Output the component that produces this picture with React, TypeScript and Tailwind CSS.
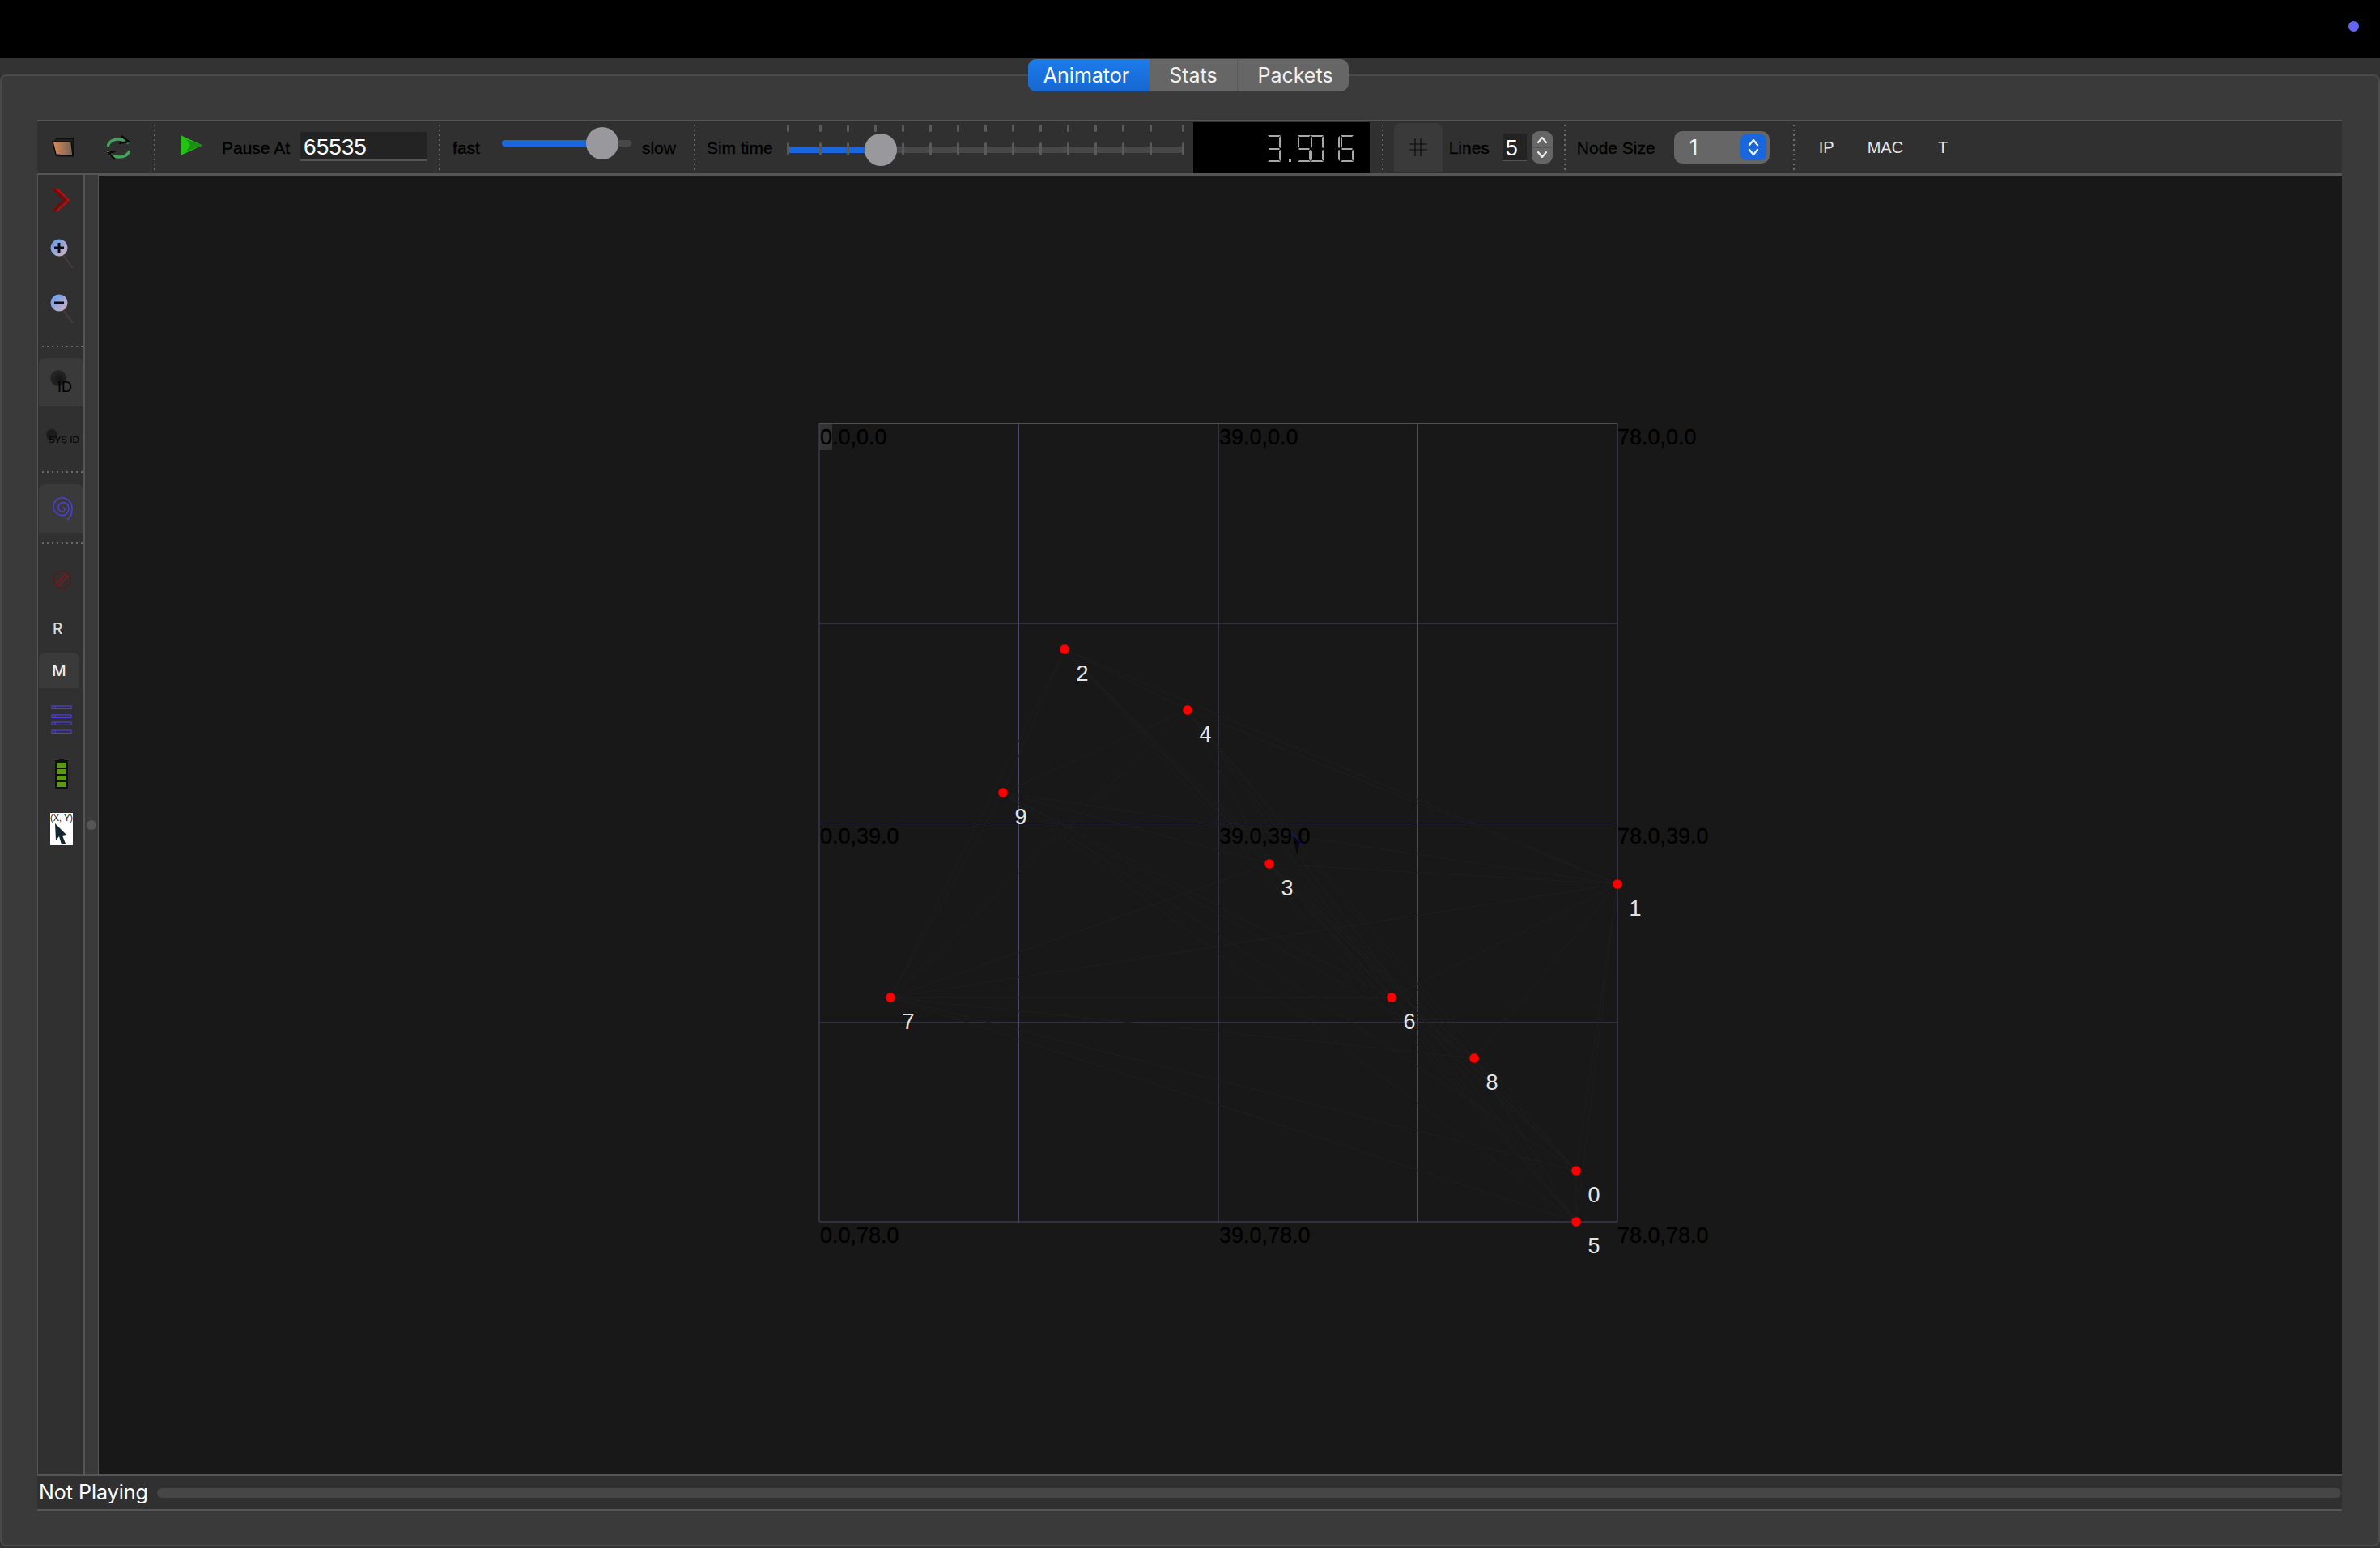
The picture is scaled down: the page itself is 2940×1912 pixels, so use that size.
import type { ReactNode } from "react";

const sans = "font-['Liberation_Sans',Arial,sans-serif]";

const ORIGIN = { x: 122, y: 217 };
const GRID = [1012, 1258.5, 1505, 1751.5, 1998];
const GRID_Y = [523.5, 770, 1016.5, 1263, 1509];

const nodes = [
  { id: 0, x: 1947, y: 1446 },
  { id: 1, x: 1998, y: 1092 },
  { id: 2, x: 1315, y: 802 },
  { id: 3, x: 1568, y: 1067 },
  { id: 4, x: 1467, y: 877 },
  { id: 5, x: 1947, y: 1509 },
  { id: 6, x: 1719, y: 1232 },
  { id: 7, x: 1100, y: 1232 },
  { id: 8, x: 1821, y: 1307 },
  { id: 9, x: 1239, y: 979 },
];

const axisLabels = [
  { text: "0.0,0.0", x: 1012, y: 540 },
  { text: "39.0,0.0", x: 1505, y: 540 },
  { text: "78.0,0.0", x: 1997, y: 540 },
  { text: "0.0,39.0", x: 1012, y: 1033 },
  { text: "39.0,39.0", x: 1505, y: 1033 },
  { text: "78.0,39.0", x: 1997, y: 1033 },
  { text: "0.0,78.0", x: 1012, y: 1526 },
  { text: "39.0,78.0", x: 1505, y: 1526 },
  { text: "78.0,78.0", x: 1997, y: 1526 },
];

const simTicks = [0, 40, 74, 108, 142, 176, 210, 244, 278, 312, 346, 380, 414, 448, 488];

function Sep() {
  return <div className="h-[56px] w-[2px] shrink-0 bg-[repeating-linear-gradient(to_bottom,#6a6a6a_0_2px,transparent_2px_6px)]" />;
}

function Label({ children, className }: { children: ReactNode; className: string }) {
  return (
    <span className={`shrink-0 text-[21px] leading-none whitespace-nowrap text-black [-webkit-text-stroke:0.3px_#000] ${className}`}>
      {children}
    </span>
  );
}

function Chevrons() {
  return (
    <svg width="14" height="24" viewBox="0 0 14 24">
      <path d="M2 9L7 3L12 9" fill="none" stroke="#f2f2f2" strokeWidth="2.4" strokeLinecap="round" strokeLinejoin="round" />
      <path d="M2 15L7 21L12 15" fill="none" stroke="#f2f2f2" strokeWidth="2.4" strokeLinecap="round" strokeLinejoin="round" />
    </svg>
  );
}

// segment outlines like the old QLCDNumber widget draws them
const TOP = "M0 0H16L14 2H2Z";
const BOTTOM = "M0 33H16L14 31H2Z";
const MID = "M2 16H14L15 17L14 18H2L1 17Z";
const UP_LEFT = "M0 1L2 3V15L0 16Z";
const UP_RIGHT = "M16 1L14 3V15L16 16Z";
const LOW_LEFT = "M0 18L2 19V30L0 32Z";
const LOW_RIGHT = "M16 18L14 19V30L16 32Z";

const SEGMENTS: Record<string, string[]> = {
  "3": [TOP, UP_RIGHT, MID, LOW_RIGHT, BOTTOM],
  "5": [TOP, UP_LEFT, MID, LOW_RIGHT, BOTTOM],
  "0": [TOP, UP_LEFT, UP_RIGHT, LOW_LEFT, LOW_RIGHT, BOTTOM],
  "1": [UP_RIGHT, LOW_RIGHT],
};

function LcdNumber() {
  const digits = [
    { c: "3", x: 0 },
    { c: "5", x: 37 },
    { c: "0", x: 53 },
    { c: "1", x: 73 },
    { c: "5", x: 90 },
  ];
  return (
    <svg width="106" height="34" viewBox="0 0 106 34" className="absolute top-[16px] left-[92px]">
      {digits.map((d, i) => (
        <g key={i} transform={`translate(${d.x} 0)`}>
          {SEGMENTS[d.c].map((p) => (
            <path key={p} d={p} fill="#a8a8a8" />
          ))}
        </g>
      ))}
      <rect x="26" y="30" width="3" height="3" fill="#a8a8a8" />
    </svg>
  );
}

function Toolbar() {
  return (
    <div className={`flex h-[68px] items-center border-t-2 border-b-2 border-[#555] bg-[#303030] pl-[18px] ${sans}`}>
      <svg width="28" height="24" viewBox="0 0 28 24" className="shrink-0">
        <defs>
          <linearGradient id="book" x1="0" x2="1" y1="0" y2="0">
            <stop offset="0" stopColor="#e08a55" />
            <stop offset="1" stopColor="#6f625a" />
          </linearGradient>
        </defs>
        <path d="M5 0H27V23H7Z" fill="#111" />
        <path d="M4 2H26V23H6Z" fill="#262626" stroke="#111" />
        <path d="M1 5H24L26 23L5 21Z" fill="url(#book)" stroke="#0c0c0c" strokeWidth="1.5" />
      </svg>
      <svg width="29" height="31" viewBox="0 0 29 31" className="ml-[40px] shrink-0">
        <path d="M1 14C2 8 8 5 14 5C18 5 22 6 27 10" fill="none" stroke="#43a35a" strokeWidth="3.5" />
        <path d="M1 20C3 25 9 27 15 27C20 27 26 25 28 19" fill="none" stroke="#43a35a" strokeWidth="3.5" />
        <path d="M18 1L27 8L15 10" fill="none" stroke="#0a0a0a" strokeWidth="2.5" />
        <path d="M10 20L2 22L10 30" fill="none" stroke="#0a0a0a" strokeWidth="2.5" />
      </svg>
      <div className="ml-[29px] shrink-0"><Sep /></div>
      <svg width="27" height="25" viewBox="0 0 27 25" className="ml-[31px] shrink-0 -translate-y-[3px]">
        <path d="M0 0L27 12.5L0 25Z" fill="#22c414" />
        <path d="M7 5L27 12.5L7 20L12 12.5Z" fill="#1a8f12" />
      </svg>
      <Label className="ml-[24px]">Pause At</Label>
      <div className="ml-[13px] flex h-[36px] w-[156px] shrink-0 items-center border-b-2 border-[#555] bg-[#232323] pt-[3px] pl-[4px] text-[28px] leading-none text-white -translate-y-[1px]">
        65535
      </div>
      <div className="ml-[15px] shrink-0"><Sep /></div>
      <Label className="ml-[15px]">fast</Label>
      <div className="relative ml-[27px] h-[40px] w-[160px] shrink-0 -translate-y-[5px]">
        <div className="absolute top-[16px] left-0 h-[8px] w-full rounded-full bg-[#484848]" />
        <div className="absolute top-[16px] left-0 h-[8px] w-[110px] rounded-l-full bg-[#1a66dc]" />
        <div className="absolute top-0 left-[104px] h-[40px] w-[40px] rounded-full bg-[#98989d]" />
      </div>
      <Label className="ml-[13px]">slow</Label>
      <div className="ml-[22px] shrink-0"><Sep /></div>
      <Label className="ml-[14px]">Sim time</Label>
      <div className="relative ml-[17px] h-[56px] w-[490px] shrink-0">
        <div className="absolute top-[27px] left-0 h-[8px] w-full bg-[#484848]" />
        <div className="absolute top-[27px] left-0 h-[8px] w-[100px] bg-[#1a66dc]" />
        {simTicks.map((t) => (
          <div key={t} className="contents">
            <div className="absolute top-0 h-[9px] w-[3px] rounded-full bg-[#5a5a5a]" style={{ left: t }} />
            <div className="absolute top-[22px] h-[16px] w-[3px] rounded-full bg-[#5a5a5a]" style={{ left: t }} />
          </div>
        ))}
        <div className="absolute top-[11px] left-[96px] h-[40px] w-[40px] rounded-full bg-[#98989d]" />
      </div>
      <div className="relative ml-[12px] h-[63px] w-[218px] shrink-0 bg-black">
        <LcdNumber />
      </div>
      <div className="ml-[15px] shrink-0"><Sep /></div>
      <div className="ml-[13px] flex h-[60px] w-[60px] shrink-0 items-center justify-center rounded-t-[8px] bg-[#3a3a3a]">
        <svg width="22" height="22" viewBox="0 0 22 22">
          <path d="M7 0V22M14 0V22M0 7H22M0 14H22" stroke="#0c0c0c" strokeWidth="1.2" />
        </svg>
      </div>
      <Label className="ml-[8px]">Lines</Label>
      <div className="ml-[17px] flex h-[34px] w-[29px] shrink-0 items-center border-b border-[#555] bg-[#232323] pt-[3px] pl-[3px] text-[27px] leading-none text-white">
        5
      </div>
      <div className="ml-[6px] flex h-[40px] w-[26px] shrink-0 flex-col items-center justify-center rounded-[9px] bg-[#666]">
        <svg width="26" height="40" viewBox="0 0 26 40">
          <path d="M8 14L13 8L18 14M8 26L13 32L18 26" fill="none" stroke="#eee" strokeWidth="2.2" strokeLinecap="round" strokeLinejoin="round" />
          <path d="M0 20H26" stroke="#565656" strokeWidth="1.5" />
        </svg>
      </div>
      <div className="ml-[14px] shrink-0"><Sep /></div>
      <Label className="ml-[14px]">Node Size</Label>
      <div className="ml-[23px] flex h-[40px] w-[118px] shrink-0 items-center justify-between rounded-[10px] bg-[#666] pr-[4px] pl-[19px] font-['Inter',sans-serif] text-[26px] leading-none text-[#f0f0f0]">
        <span>1</span>
        <div className="flex h-[32px] w-[32px] items-center justify-center rounded-[7px] bg-[#1a66dc]">
          <Chevrons />
        </div>
      </div>
      <div className="ml-[29px] shrink-0"><Sep /></div>
      <span className="ml-[30px] shrink-0 text-[20px] leading-none text-[#e6e6e6]">IP</span>
      <span className="ml-[41px] shrink-0 text-[20px] leading-none text-[#e6e6e6]">MAC</span>
      <span className="ml-[43px] shrink-0 text-[20px] leading-none text-[#e6e6e6]">T</span>
    </div>
  );
}

function DotRow() {
  return <div className="ml-[5px] h-[2px] w-[50px] bg-[repeating-linear-gradient(to_right,#6a6a6a_0_2px,transparent_2px_6px)]" />;
}

function ZoomIcon({ minus }: { minus?: boolean }) {
  return (
    <svg width="30" height="38" viewBox="0 0 30 38">
      <defs>
        <linearGradient id={minus ? "zm" : "zp"} x1="0" x2="1" y1="0" y2="1">
          <stop offset="0" stopColor="#5a9df5" />
          <stop offset="1" stopColor="#d8b0b8" />
        </linearGradient>
      </defs>
      <path d="M16 20L28 36" stroke="#4a3a42" strokeWidth="2" />
      <circle cx="11" cy="11" r="10.5" fill={`url(#${minus ? "zm" : "zp"})`} />
      <path d={minus ? "M5 11H17" : "M5 11H17M11 5V17"} stroke="#0c0c12" strokeWidth="3" />
    </svg>
  );
}

function Sidebar() {
  return (
    <div className={`flex w-[59px] shrink-0 flex-col items-start border-r-2 border-l border-[#555] bg-[#303030] ${sans}`}>
      <svg width="24" height="30" viewBox="0 0 24 30" className="mt-[16px] ml-[16px]">
        <path d="M2 1L17 15L2 29" fill="none" stroke="#7c0808" strokeWidth="3" />
        <path d="M7 1L22 15L7 29" fill="none" stroke="#c00c0c" strokeWidth="2.2" />
      </svg>
      <div className="mt-[33px] ml-[15px]"><ZoomIcon /></div>
      <div className="mt-[30px] ml-[15px]"><ZoomIcon minus /></div>
      <div className="mt-[26px]"><DotRow /></div>
      <div className="relative mt-[13px] ml-[1px] h-[60px] w-[55px] rounded-t-[8px] bg-[#3a3a3a]">
        <div className="absolute top-[15px] left-[14px] h-[20px] w-[20px] rounded-full bg-[radial-gradient(circle_at_60%_60%,#151515,#2e2e2e)]" />
        <span className="absolute top-[27px] left-[23px] text-[18px] leading-none text-black">ID</span>
      </div>
      <div className="relative h-[60px] w-[55px]">
        <div className="absolute top-[28px] left-[10px] h-[14px] w-[14px] rounded-full bg-[#1c1c1c]" />
        <span className="absolute top-[36px] left-[13px] text-[11.5px] leading-none whitespace-nowrap text-black">SYS ID</span>
      </div>
      <div className="mt-[20px]"><DotRow /></div>
      <div className="mt-[14px] ml-[1px] flex h-[60px] w-[55px] items-center justify-center rounded-t-[8px] bg-[#3a3a3a]">
        <svg width="26" height="30" viewBox="0 0 26 30" className="translate-x-[1px]">
          <path
            d="M13 15C15 13 17 16 15 18C12 20 8 18 8 14C8 9 14 6 18 9C23 13 21 21 16 23C10 25 3 21 2 14C1 7 7 1 14 2C21 3 26 9 25 17C25 22 23 26 19 29"
            fill="none"
            stroke="#4d3fe0"
            strokeWidth="1.4"
          />
        </svg>
      </div>
      <div className="mt-[12px]"><DotRow /></div>
      <svg width="24" height="24" viewBox="0 0 24 24" className="mt-[32px] ml-[18px]">
        <circle cx="12" cy="12" r="10.6" fill="none" stroke="#6e0a12" strokeWidth="1" />
        <path d="M4 17L17 4M7 20L20 7" stroke="#a00c14" strokeWidth="1.3" />
      </svg>
      <span className="mt-[39px] ml-[18px] font-['Inter',sans-serif] text-[19px] leading-[20px] font-medium text-[#dcdcdc]">R</span>
      <div className="mt-[19px] ml-[1px] flex h-[44px] w-[50px] items-center justify-center rounded-t-[8px] bg-[#3a3a3a] font-['Inter',sans-serif] text-[19px] leading-none font-medium text-[#eee]">
        M
      </div>
      <svg width="26" height="36" viewBox="0 0 26 36" className="mt-[20px] ml-[16px]">
        {[2, 13, 22, 32].map((y) => (
          <g key={y}>
            <rect x="1" y={y} width="24" height="3.4" fill="none" stroke="#4d3fe0" strokeWidth="1.2" />
            <path d={`M5 ${y}V${y + 3.4}`} stroke="#4d3fe0" strokeWidth="1.2" />
          </g>
        ))}
      </svg>
      <svg width="16" height="38" viewBox="0 0 16 38" className="mt-[31px] ml-[21px]">
        <rect x="5" y="0" width="6" height="3" fill="#101010" />
        <rect x="0" y="2" width="16" height="36" rx="1" fill="#101010" />
        {[5, 13, 21, 29].map((y) => (
          <rect key={y} x="2.5" y={y} width="11" height="6" fill="#5b9a10" />
        ))}
      </svg>
      <div className="relative mt-[29px] ml-[15px] h-[40px] w-[28px] overflow-hidden bg-white">
        <span className="absolute top-0 left-0 text-[11px] leading-[12px] whitespace-nowrap text-[#1a1a1a]">(X, Y)</span>
        <svg width="28" height="40" viewBox="0 0 28 40" className="absolute top-0 left-0">
          <path d="M6 13L7 34L11 29L14 39L19 38L15 28L20 27Z" fill="#13282e" />
        </svg>
      </div>
    </div>
  );
}

function Splitter() {
  return (
    <div className="flex w-[16px] shrink-0 flex-col items-center bg-[#3a3a3a] pt-[797px]">
      <div className="h-[12px] w-[12px] rounded-full bg-[#565656]" />
    </div>
  );
}

function Canvas() {
  const lines = nodes.flatMap((a, i) => nodes.slice(i + 1).map((b) => [a, b] as const));
  return (
    <div className={`relative min-w-0 flex-1 overflow-hidden border-t border-l border-[#555] bg-[#181818] ${sans}`}>
      <svg width="2772" height="1604" className="absolute top-0 left-0">
        <g transform={`translate(${-ORIGIN.x} ${-ORIGIN.y})`}>
          <rect x="1012" y="523" width="16" height="33" fill="#333" />
          {GRID.map((x) => (
            <path key={x} d={`M${x} 523V1509`} stroke="#4a4866" strokeWidth="1" />
          ))}
          {GRID_Y.map((y) => (
            <path key={y} d={`M1012 ${y}H1998`} stroke="#4a4866" strokeWidth="1" />
          ))}
          {lines.map(([a, b]) => (
            <line key={`${a.id}-${b.id}`} x1={a.x} y1={a.y} x2={b.x} y2={b.y} stroke="#1e1e1e" strokeWidth="1" />
          ))}
          <path d="M1588 1021L1607 1041" stroke="#1414b0" strokeWidth="1" />
          <circle cx="1605" cy="1040" r="3" fill="none" stroke="#1414b0" strokeWidth="1" />
          <path d="M1597 1032L1602 1057L1606 1040Z" fill="#0a0a0a" />
          {nodes.map((n) => (
            <circle key={n.id} cx={n.x} cy={n.y} r="6" fill="#ff0000" stroke="#600" strokeWidth="0.5" />
          ))}
        </g>
      </svg>
      {axisLabels.map((l) => (
        <span
          key={l.text}
          className="absolute -translate-y-1/2 text-[27px] leading-none whitespace-nowrap text-black [-webkit-text-stroke:0.3px_#000]"
          style={{ left: l.x + 1 - ORIGIN.x, top: l.y - ORIGIN.y }}
        >
          {l.text}
        </span>
      ))}
      {nodes.map((n) => (
        <span
          key={n.id}
          className="absolute -translate-x-1/2 -translate-y-1/2 text-[27px] leading-none text-[#e4e4e4]"
          style={{ left: n.x + 22 - ORIGIN.x, top: n.y + 30 - ORIGIN.y }}
        >
          {n.id}
        </span>
      ))}
    </div>
  );
}

function Tabs() {
  return (
    <div className="absolute top-[1px] left-[1270px] flex h-[40px] w-[396px] overflow-hidden rounded-[10px] bg-[#666] font-['Inter',sans-serif] text-[25px] leading-none text-[#f0f0f0]">
      <div className="flex w-[150px] items-center justify-center bg-[linear-gradient(#1b7cec,#1767d0)] pr-[6px] text-white">Animator</div>
      <div className="flex w-[109px] items-center justify-center border-r border-[#5a5a5a]">Stats</div>
      <div className="flex flex-1 items-center justify-center pl-[5px]">Packets</div>
    </div>
  );
}

export default function App() {
  return (
    <div className="flex h-[1912px] w-[2940px] flex-col overflow-hidden bg-[#333]">
      <div className="flex h-[72px] shrink-0 items-center justify-end bg-black pr-[26px]">
        <div className="mb-[8px] h-[13px] w-[13px] rounded-full bg-[#6366f1]" />
      </div>
      <div className="relative min-h-0 flex-1 pt-[20px] pb-[2px]">
        <Tabs />
        <div className="flex h-full flex-col rounded-[8px] border-2 border-[#4a4a4a] bg-[#3a3a3a] pt-[54px] pr-[45px] pb-[42px] pl-[44px]">
          <Toolbar />
          <div className="flex min-h-0 flex-1 border-b-2 border-[#555]">
            <Sidebar />
            <Splitter />
            <Canvas />
          </div>
          <div className="flex h-[43px] shrink-0 items-center border-b-2 border-[#555] bg-[#303030] pr-[1px] pl-[2px]">
            <span className="font-['Inter',sans-serif] text-[25px] leading-none whitespace-nowrap text-white">Not Playing</span>
            <div className="ml-[11px] h-[12px] min-w-0 flex-1 rounded-full bg-[#464646]" />
          </div>
        </div>
      </div>
    </div>
  );
}
